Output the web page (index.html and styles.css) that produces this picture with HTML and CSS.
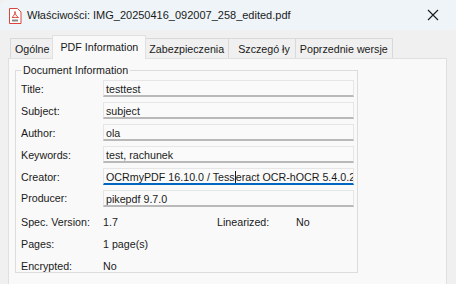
FILE: index.html
```html
<!DOCTYPE html>
<html>
<head>
<meta charset="utf-8">
<link rel="stylesheet" href="styles.css">
</head>
<body>
<div class="window">
  <div class="titlebar">
    <svg class="pdf-icon" width="14" height="16" viewBox="0 0 14 16">
      <path d="M1.5 0.5h8l3.5 3.5v11.5h-11.5z" fill="#fff" stroke="#d9453b" stroke-width="1"/>
      <path d="M4 9.5c1.5-1 3-3.5 3-6 0 2.5 1.5 5 3.5 6-2-0.3-4.5 0-6.5 0z" fill="none" stroke="#d9453b" stroke-width="1"/>
      <rect x="4" y="11.5" width="6" height="2" fill="#8a8a8a"/>
    </svg>
    <span class="title">Właściwości: IMG_20250416_092007_258_edited.pdf</span>
    <span class="close">
      <svg width="12" height="12" viewBox="0 0 12 12"><path d="M1 1L11 11M11 1L1 11" stroke="#1a1a1a" stroke-width="1.1"/></svg>
    </span>
  </div>
  <div class="body">
    <div class="tabs">
      <div class="tab">Ogólne</div>
      <div class="tab active">PDF Information</div>
      <div class="tab">Zabezpieczenia</div>
      <div class="tab details">Szczegó ły</div>
      <div class="tab">Poprzednie wersje</div>
    </div>
    <div class="panel">
      <fieldset class="group">
        <legend>Document Information</legend>
        <div class="row"><span class="label">Title:</span><span class="field">testtest</span></div>
        <div class="row"><span class="label">Subject:</span><span class="field">subject</span></div>
        <div class="row"><span class="label">Author:</span><span class="field">ola</span></div>
        <div class="row"><span class="label">Keywords:</span><span class="field">test, rachunek</span></div>
        <div class="row"><span class="label">Creator:</span><span class="field focused">OCRmyPDF 16.10.0 / Tess<span class="caret"></span>eract OCR-hOCR 5.4.0.202</span></div>
        <div class="row"><span class="label">Producer:</span><span class="field">pikepdf 9.7.0</span></div>
        <div class="row plain first"><span class="label">Spec. Version:</span><span class="value">1.7</span><span class="label2">Linearized:</span><span class="value last">No</span></div>
        <div class="row plain"><span class="label">Pages:</span><span class="value">1 page(s)</span></div>
        <div class="row plain"><span class="label">Encrypted:</span><span class="value">No</span></div>
      </fieldset>
    </div>
  </div>
</div>
</body>
</html>
```
FILE: styles.css
```css
html, body {
  margin: 0;
  padding: 0;
  background: #f0f0f0;
}
body {
  width: 456px;
  height: 284px;
  overflow: hidden;
  font-family: "Liberation Sans", Arial, sans-serif;
  font-size: 10.7px;
  color: #1a1a1a;
}
.window {
  width: 456px;
  height: 284px;
  background: #f0f0f0;
  border-top-left-radius: 8px;
  overflow: hidden;
}
.titlebar {
  height: 30px;
  background: #eef4f8;
  display: flex;
  align-items: center;
  padding-left: 8px;
}
.pdf-icon {
  margin-right: 5px;
  margin-top: 1px;
}
.title {
  font-size: 11px;
  color: #1a1a1a;
  flex: 1;
}
.close {
  width: 46px;
  display: flex;
  justify-content: center;
  align-items: center;
}
.body {
  padding: 4px 9px 0 8px;
}
.tabs {
  display: flex;
  align-items: flex-end;
  height: 24px;
  padding-left: 2px;
}
.tab {
  height: 20px;
  line-height: 21px;
  padding: 0 4px;
  border: 1px solid #d9d9d9;
  border-bottom: none;
  margin-right: -1px;
  background: #f0f0f0;
  box-sizing: border-box;
  white-space: nowrap;
}
.tab.details {
  padding: 0 5px 0 9px;
}
.tab.active {
  height: 24px;
  line-height: 22px;
  background: #f9f9f9;
  position: relative;
  z-index: 1;
  margin: 0 -2px -1px -1px;
  padding: 0 7px;
  border-color: #e0e0e0;
}
.panel {
  background: #f9f9f9;
  border: 1px solid #e0e0e0;
  height: 232px;
  padding: 5px 6px;
  box-sizing: border-box;
}
.group {
  margin: 0;
  min-width: 0;
  width: 343px;
  box-sizing: border-box;
  border: 1px solid #dcdcdc;
  padding: 2px 3px 0 5px;
  height: 209px;
}
.group legend {
  padding: 0 2px;
  margin-left: 0;
}
.row {
  display: flex;
  align-items: center;
  height: 21.9px;
}
.row.first {
  margin-top: 2px;
}
.label {
  width: 82px;
  flex: none;
}
.field {
  flex: 1;
  min-width: 0;
  height: 17px;
  line-height: 16px;
  box-sizing: border-box;
  border: 1px solid #e6e6e6;
  border-bottom: 2px solid #b9b9b9;
  background: #fafafa;
  padding-left: 2px;
  white-space: nowrap;
  overflow: hidden;
}
.field.focused {
  border-bottom-color: #0067c0;
}
.caret {
  display: inline-block;
  width: 1px;
  height: 12px;
  background: #1a1a1a;
  vertical-align: -2px;
}
.value {
  flex: none;
  width: 114px;
}
.value.last {
  width: auto;
}
.label2 {
  flex: none;
  width: 79px;
}
```
